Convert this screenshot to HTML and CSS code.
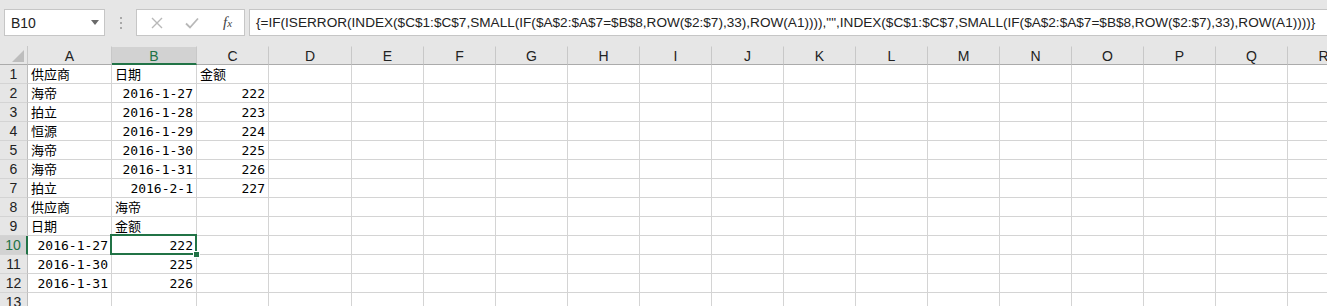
FILE: index.html
```html
<!DOCTYPE html>
<html lang="zh-CN">
<head>
    <meta charset="UTF-8">
    <meta name="viewport" content="width=device-width, initial-scale=1.0">
    <title>Excel - 数组公式</title>
    <link rel="stylesheet" href="styles.css">
</head>
<body>
    <div class="toolbar">
        <div class="namebox">
            <span>B10</span>
            <svg class="caret" width="8" height="5" viewBox="0 0 8 5"><path d="M0 0h8L4 5z" fill="#6a6a6a"/></svg>
        </div>
        <div class="dots"><b></b><b></b><b></b></div>
        <div class="fxbox">
            <svg width="12" height="12" viewBox="0 0 12 12"><path d="M1 1l10 10M11 1L1 11" stroke="#b8b8b8" stroke-width="1.4"/></svg>
            <svg width="14" height="12" viewBox="0 0 14 12"><path d="M1 6.5l4 4L13 1.5" stroke="#b8b8b8" stroke-width="1.8" fill="none"/></svg>
            <span class="fx">f<small>x</small></span>
        </div>
        <div class="formula">{=IF(ISERROR(INDEX($C$1:$C$7,SMALL(IF($A$2:$A$7=$B$8,ROW($2:$7),33),ROW(A1)))),"",INDEX($C$1:$C$7,SMALL(IF($A$2:$A$7=$B$8,ROW($2:$7),33),ROW(A1))))}</div>
    </div>

    <div class="sheet">
        <div class="corner"><svg width="12" height="12" viewBox="0 0 12 12"><path d="M12 0v12H0z" fill="#bdbdbd"/></svg></div>
        <div class="ch">A</div><div class="ch active">B</div><div class="ch">C</div><div class="ch">D</div><div class="ch">E</div><div class="ch">F</div><div class="ch">G</div><div class="ch">H</div><div class="ch">I</div><div class="ch">J</div><div class="ch">K</div><div class="ch">L</div><div class="ch">M</div><div class="ch">N</div><div class="ch">O</div><div class="ch">P</div><div class="ch">Q</div><div class="ch">R</div>

        <div class="rh">1</div><div>供应商</div><div>日期</div><div>金额</div>
        <div></div><div></div><div></div><div></div><div></div><div></div><div></div><div></div><div></div><div></div><div></div><div></div><div></div><div></div><div></div>

        <div class="rh">2</div><div>海帝</div><div class="num">2016-1-27</div><div class="num">222</div>
        <div></div><div></div><div></div><div></div><div></div><div></div><div></div><div></div><div></div><div></div><div></div><div></div><div></div><div></div><div></div>

        <div class="rh">3</div><div>拍立</div><div class="num">2016-1-28</div><div class="num">223</div>
        <div></div><div></div><div></div><div></div><div></div><div></div><div></div><div></div><div></div><div></div><div></div><div></div><div></div><div></div><div></div>

        <div class="rh">4</div><div>恒源</div><div class="num">2016-1-29</div><div class="num">224</div>
        <div></div><div></div><div></div><div></div><div></div><div></div><div></div><div></div><div></div><div></div><div></div><div></div><div></div><div></div><div></div>

        <div class="rh">5</div><div>海帝</div><div class="num">2016-1-30</div><div class="num">225</div>
        <div></div><div></div><div></div><div></div><div></div><div></div><div></div><div></div><div></div><div></div><div></div><div></div><div></div><div></div><div></div>

        <div class="rh">6</div><div>海帝</div><div class="num">2016-1-31</div><div class="num">226</div>
        <div></div><div></div><div></div><div></div><div></div><div></div><div></div><div></div><div></div><div></div><div></div><div></div><div></div><div></div><div></div>

        <div class="rh">7</div><div>拍立</div><div class="num">2016-2-1</div><div class="num">227</div>
        <div></div><div></div><div></div><div></div><div></div><div></div><div></div><div></div><div></div><div></div><div></div><div></div><div></div><div></div><div></div>

        <div class="rh">8</div><div>供应商</div><div>海帝</div><div></div>
        <div></div><div></div><div></div><div></div><div></div><div></div><div></div><div></div><div></div><div></div><div></div><div></div><div></div><div></div><div></div>

        <div class="rh">9</div><div>日期</div><div>金额</div><div></div>
        <div></div><div></div><div></div><div></div><div></div><div></div><div></div><div></div><div></div><div></div><div></div><div></div><div></div><div></div><div></div>

        <div class="rh active">10</div><div class="num">2016-1-27</div><div class="num current">222</div><div></div>
        <div></div><div></div><div></div><div></div><div></div><div></div><div></div><div></div><div></div><div></div><div></div><div></div><div></div><div></div><div></div>

        <div class="rh">11</div><div class="num">2016-1-30</div><div class="num">225</div><div></div>
        <div></div><div></div><div></div><div></div><div></div><div></div><div></div><div></div><div></div><div></div><div></div><div></div><div></div><div></div><div></div>

        <div class="rh">12</div><div class="num">2016-1-31</div><div class="num">226</div><div></div>
        <div></div><div></div><div></div><div></div><div></div><div></div><div></div><div></div><div></div><div></div><div></div><div></div><div></div><div></div><div></div>

        <div class="rh">13</div><div></div><div></div><div></div>
        <div></div><div></div><div></div><div></div><div></div><div></div><div></div><div></div><div></div><div></div><div></div><div></div><div></div><div></div><div></div>
    </div>
</body>
</html>
```

FILE: styles.css
```css
html, body {
    margin: 0;
    padding: 0;
}
body {
    width: 1327px;
    height: 306px;
    overflow: hidden;
    background-color: #e6e6e6;
    font-family: "Liberation Sans", Arial, sans-serif;
}

/* top bar: name box + formula bar */
.toolbar {
    display: flex;
    align-items: flex-start;
    height: 46px;
    padding: 9px 0 0 4px;
    box-sizing: border-box;
}
.namebox {
    width: 101px;
    height: 27px;
    box-sizing: border-box;
    background-color: #fff;
    border: 1px solid #c6c6c6;
    display: flex;
    align-items: center;
    justify-content: space-between;
    padding: 0 5px 0 6px;
    font-size: 14px;
    color: #222;
}
.dots {
    width: 31px;
    height: 27px;
    display: flex;
    flex-direction: column;
    align-items: center;
    justify-content: center;
    gap: 3px;
}
.dots b {
    width: 2px;
    height: 2px;
    background-color: #a8a8a8;
}
.fxbox {
    width: 109px;
    height: 27px;
    box-sizing: border-box;
    background-color: #fff;
    border: 1px solid #c6c6c6;
    display: flex;
    align-items: center;
    padding: 0 0 0 14px;
    gap: 22px;
}
.fx {
    font-family: "Liberation Serif", serif;
    font-style: italic;
    font-size: 15px;
    color: #444;
    margin-left: 2px;
}
.fx small {
    font-size: 11px;
}
.formula {
    flex: 1;
    height: 27px;
    margin-left: 4px;
    box-sizing: border-box;
    background-color: #fff;
    border: 1px solid #c6c6c6;
    border-right: none;
    padding: 0 0 0 6px;
    font-size: 13.6px;
    line-height: 25px;
    color: #222;
    white-space: nowrap;
    overflow: hidden;
}

/* worksheet grid */
.sheet {
    display: grid;
    grid-template-columns: 28px 84px 85px 72px 83px repeat(14, 72px);
    grid-auto-rows: 19px;
    background-color: #fff;
}
.sheet > div {
    box-sizing: border-box;
    border-right: 1px solid #d4d4d4;
    border-bottom: 1px solid #d4d4d4;
    padding: 0 3px;
    font-family: "DejaVu Sans Mono", "Noto Sans CJK SC", monospace;
    font-size: 13px;
    line-height: 19px;
    color: #000;
    white-space: nowrap;
    overflow: visible;
}
.sheet > .num {
    text-align: right;
    padding-right: 3px;
}
.sheet > .corner {
    background-color: #e6e6e6;
    border-right: 1px solid #c8c8c8;
    border-bottom: 1px solid #ababab;
    display: flex;
    align-items: flex-end;
    justify-content: flex-end;
    padding: 0 3px 2px 0;
}
.sheet > .ch {
    background-color: #e6e6e6;
    border-right: 1px solid #c8c8c8;
    border-bottom: 1px solid #ababab;
    border-top: 1px solid #e6e6e6;
    text-align: center;
    font-family: "Liberation Sans", Arial, sans-serif;
    font-size: 14px;
    line-height: 18px;
    color: #222;
}
.sheet > .ch.active {
    background-color: #d2d2d2;
    border-bottom: 2px solid #217346;
    color: #217346;
}
.sheet > .rh {
    background-color: #e6e6e6;
    border-right: 1px solid #bdbdbd;
    border-bottom: 1px solid #d4d4d4;
    text-align: center;
    padding: 0;
    font-family: "Liberation Sans", Arial, sans-serif;
    font-size: 14px;
    color: #222;
}
.sheet > .rh.active {
    background-color: #d2d2d2;
    border-right: 2px solid #217346;
    color: #217346;
}
.sheet > .current {
    position: relative;
}
.sheet > .current::after {
    content: "";
    position: absolute;
    left: -2px;
    top: -2px;
    right: -1px;
    bottom: -1px;
    border: 2px solid #217346;
}
.sheet > .current::before {
    content: "";
    position: absolute;
    right: -4px;
    bottom: -4px;
    width: 5px;
    height: 5px;
    background-color: #217346;
    border: 1px solid #fff;
    z-index: 1;
}
```
